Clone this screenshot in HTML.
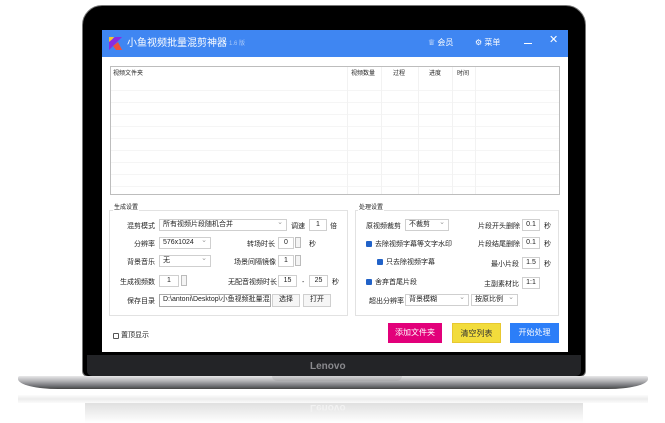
<!DOCTYPE html>
<html><head><meta charset="utf-8"><style>
*{margin:0;padding:0;box-sizing:border-box}
body{width:665px;height:423px;background:#fff;position:relative;overflow:hidden;font-family:"Liberation Sans","Noto Sans CJK SC",sans-serif;font-size:7px;color:#222}
.a{position:absolute}
.t{position:absolute;white-space:nowrap;font-size:7px;line-height:9px}
.in{position:absolute;border:1px solid #cfcfcf;background:#fff;font-size:7px;line-height:10px;padding:0 3px;white-space:nowrap;overflow:hidden}
.dd::after{content:"⌄";position:absolute;right:3px;top:-2px;color:#999;font-size:7px}
.spin{position:absolute;width:6px;height:11px;border:1px solid #bbb;background:#f4f4f4}
.cb{position:absolute;width:6px;height:6px;background:#2162c8;border-radius:1px}
.btn{position:absolute;font-size:8px;line-height:20px;text-align:center;height:20px}
</style></head><body>
<div class="a" style="left:82px;top:5px;width:504px;height:372px;background:#000;border-radius:20px 20px 6px 6px;border:1px solid #777"></div>
<div class="a" style="left:87px;top:355px;width:494px;height:21px;background:#232427;border-radius:0 0 5px 5px"></div>
<div class="t" style="left:310px;top:362px;font-size:10px;line-height:10px;color:#8a8a8e;font-weight:bold">Lenovo</div>
<div class="a" style="left:18px;top:376px;width:630px;height:13px;background:linear-gradient(#e8e8e9,#b0b0b3 40%,#6a6b6f 80%,#444);border-radius:2px 2px 40px 40px/2px 2px 10px 10px"></div>
<div class="a" style="left:272px;top:376px;width:130px;height:5px;background:linear-gradient(#d4d4d6,#a8a8aa);border-radius:0 0 6px 6px"></div>
<div class="a" style="left:18px;top:395px;width:630px;height:8px;background:linear-gradient(#fcfcfc,#ececec,#fbfbfb)"></div>
<div class="a" style="left:85px;top:403px;width:498px;height:20px;background:linear-gradient(#e0e0e0,#fff)"></div>
<div class="t" style="left:310px;top:403px;font-size:10px;color:#f2f2f2;transform:scaleY(-1);font-weight:bold">Lenovo</div>
<div class="a" style="left:102px;top:30px;width:466px;height:322px;background:#fff"></div>
<div class="a" style="left:102px;top:30px;width:466px;height:27px;background:#3f86f2"></div>
<svg class="a" style="left:109px;top:37px" width="13" height="13" viewBox="0 0 13 13"><path d="M0 0h5l-5 7z" fill="#f8c62c"/><path d="M0 13V5l6-5h7L5 8z" fill="#8a2be2"/><path d="M4 9l5-4 4 8H7z" fill="#f0503c"/></svg>
<div class="t" style="left:127px;top:37px;font-size:10px;line-height:13px;color:#fff">小鱼视频批量混剪神器</div>
<div class="t" style="left:229px;top:40px;font-size:6px;color:#a8c8f8">1.6 版</div>
<div class="t" style="left:428px;top:38px;color:#fff;font-size:8px">♕ 会员</div>
<div class="t" style="left:475px;top:38px;color:#fff;font-size:8px">⚙ 菜单</div>
<div class="a" style="left:524px;top:43px;width:8px;height:1px;background:#fff"></div>
<div class="t" style="left:549px;top:36px;color:#fff;font-size:11px">✕</div>
<div class="a" style="left:110px;top:66px;width:450px;height:129px;border:1px solid #bdbdbd;background:repeating-linear-gradient(#fff 0 11px,#f5f5f5 11px 12px)"></div>
<div class="a" style="left:111px;top:67px;width:448px;height:14px;background:#fff"></div>
<div class="a" style="left:347px;top:67px;width:1px;height:127px;background:#f2f2f2"></div>
<div class="a" style="left:381px;top:67px;width:1px;height:127px;background:#f2f2f2"></div>
<div class="a" style="left:418px;top:67px;width:1px;height:127px;background:#f2f2f2"></div>
<div class="a" style="left:452px;top:67px;width:1px;height:127px;background:#f2f2f2"></div>
<div class="a" style="left:475px;top:67px;width:1px;height:127px;background:#f2f2f2"></div>
<div class="t" style="left:113px;top:70px;font-size:6px">视频文件夹</div>
<div class="t" style="left:351px;top:70px;font-size:6px">视频数量</div>
<div class="t" style="left:393px;top:70px;font-size:6px">过程</div>
<div class="t" style="left:429px;top:70px;font-size:6px">进度</div>
<div class="t" style="left:457px;top:70px;font-size:6px">时间</div>
<div class="a" style="left:109px;top:210px;width:239px;height:106px;border:1px solid #e2e2e2"></div>
<div class="t" style="left:113px;top:204px;background:#fff;font-size:6px;padding:0 1px">生成设置</div>
<div class="t" style="left:127px;top:222px">混剪模式</div>
<div class="in dd" style="left:159px;top:219px;width:128px;height:12px">所有视频片段随机合并</div>
<div class="t" style="left:291px;top:222px">调速</div>
<div class="in" style="left:309px;top:219px;width:18px;height:12px;text-align:center">1</div>
<div class="t" style="left:330px;top:222px">倍</div>
<div class="t" style="left:134px;top:240px">分辨率</div>
<div class="in dd" style="left:159px;top:237px;width:52px;height:12px">576x1024</div>
<div class="t" style="left:247px;top:240px">转场时长</div>
<div class="in" style="left:278px;top:237px;width:16px;height:12px;text-align:center">0</div>
<div class="spin" style="left:295px;top:237px"></div>
<div class="t" style="left:309px;top:240px">秒</div>
<div class="t" style="left:127px;top:258px">背景音乐</div>
<div class="in dd" style="left:159px;top:255px;width:52px;height:12px">无</div>
<div class="t" style="left:234px;top:258px">场景间隔镜像</div>
<div class="in" style="left:278px;top:255px;width:16px;height:12px;text-align:center">1</div>
<div class="spin" style="left:295px;top:255px"></div>
<div class="t" style="left:120px;top:278px">生成视频数</div>
<div class="in" style="left:159px;top:275px;width:20px;height:12px;text-align:center">1</div>
<div class="spin" style="left:181px;top:275px"></div>
<div class="t" style="left:228px;top:278px">无配音视频时长</div>
<div class="in" style="left:278px;top:275px;width:19px;height:12px;text-align:center">15</div>
<div class="t" style="left:302px;top:278px">-</div>
<div class="in" style="left:309px;top:275px;width:19px;height:12px;text-align:center">25</div>
<div class="t" style="left:332px;top:278px">秒</div>
<div class="t" style="left:127px;top:297px">保存目录</div>
<div class="in" style="left:159px;top:294px;width:112px;height:13px;border-color:#aaa">D:\antoni\Desktop\小鱼视频批量混</div>
<div class="in" style="left:272px;top:294px;width:28px;height:13px;text-align:center;background:#f6f6f6">选择</div>
<div class="in" style="left:303px;top:294px;width:28px;height:13px;text-align:center;background:#f6f6f6">打开</div>
<div class="a" style="left:355px;top:210px;width:204px;height:106px;border:1px solid #e2e2e2"></div>
<div class="t" style="left:358px;top:204px;background:#fff;font-size:6px;padding:0 1px">处理设置</div>
<div class="t" style="left:366px;top:222px">原视频裁剪</div>
<div class="in dd" style="left:405px;top:219px;width:44px;height:12px">不裁剪</div>
<div class="t" style="left:478px;top:222px">片段开头删除</div>
<div class="in" style="left:522px;top:219px;width:18px;height:12px;text-align:center">0.1</div>
<div class="t" style="left:544px;top:222px">秒</div>
<div class="cb" style="left:366px;top:241px"></div>
<div class="t" style="left:375px;top:240px">去除视频字幕等文字水印</div>
<div class="t" style="left:478px;top:240px">片段结尾删除</div>
<div class="in" style="left:522px;top:237px;width:18px;height:12px;text-align:center">0.1</div>
<div class="t" style="left:544px;top:240px">秒</div>
<div class="cb" style="left:377px;top:259px"></div>
<div class="t" style="left:386px;top:258px">只去除视频字幕</div>
<div class="t" style="left:491px;top:260px">最小片段</div>
<div class="in" style="left:522px;top:257px;width:18px;height:12px;text-align:center">1.5</div>
<div class="t" style="left:544px;top:260px">秒</div>
<div class="cb" style="left:366px;top:279px"></div>
<div class="t" style="left:375px;top:278px">舍弃首尾片段</div>
<div class="t" style="left:484px;top:280px">主副素材比</div>
<div class="in" style="left:522px;top:277px;width:18px;height:12px;text-align:center">1:1</div>
<div class="t" style="left:369px;top:297px">超出分辨率</div>
<div class="in dd" style="left:405px;top:294px;width:64px;height:12px">背景模糊</div>
<div class="in dd" style="left:471px;top:294px;width:47px;height:12px">按原比例</div>
<div class="a" style="left:113px;top:333px;width:6px;height:6px;border:1px solid #555;border-radius:1px"></div>
<div class="t" style="left:121px;top:331px">置顶显示</div>
<div class="btn" style="left:388px;top:323px;width:54px;background:#e2007a;color:#fff">添加文件夹</div>
<div class="btn" style="left:452px;top:323px;width:49px;background:#f2dc3c;color:#333;border:1px solid #e8c830">清空列表</div>
<div class="btn" style="left:510px;top:323px;width:49px;background:#2c7ef8;color:#fff">开始处理</div>
</body></html>
